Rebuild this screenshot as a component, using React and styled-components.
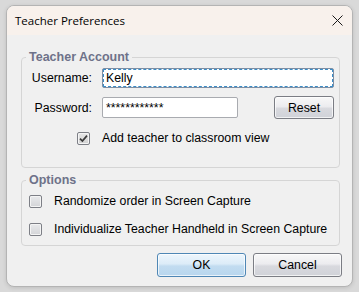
import styled, { createGlobalStyle } from "styled-components";

const GlobalStyle = createGlobalStyle`
  * { box-sizing: border-box; }
  html, body { margin: 0; padding: 0; background: #d9d9d9; }
  body {
    width: 359px;
    height: 292px;
    overflow: hidden;
    font-family: "Liberation Sans", Arial, sans-serif;
  }
`;

export default function App() {
  return (
    <>
      <GlobalStyle />
      <Window>
        <TitleBar>
          <Title>Teacher Preferences</Title>
          <CloseButton aria-label="Close">
            <svg width="11" height="11" viewBox="0 0 11 11">
              <path d="M0.5 0.5 L10.5 10.5 M10.5 0.5 L0.5 10.5" stroke="#1a1a1a" strokeWidth="1" fill="none" />
            </svg>
          </CloseButton>
        </TitleBar>
        <Body>
          <Group $pad="4px 5px 20px 0">
            <Legend>Teacher Account</Legend>
            <Row>
              <Label>Username:</Label>
              <Field $focused $grow>Kelly</Field>
            </Row>
            <Row $mt={8}>
              <Label>Password:</Label>
              <Field $width={136}>************</Field>
              <Spacer />
              <Button $width={60}>Reset</Button>
            </Row>
            <CheckRow $indent={55} $mt={10}>
              <Check checked />
              <CheckText>Add teacher to classroom view</CheckText>
            </CheckRow>
          </Group>
          <Group $pad="5px 5px 7px 0" $mt={5}>
            <Legend>Options</Legend>
            <CheckRow $indent={7}>
              <Check />
              <CheckText>Randomize order in Screen Capture</CheckText>
            </CheckRow>
            <CheckRow $indent={7} $mt={10}>
              <Check />
              <CheckText>Individualize Teacher Handheld in Screen Capture</CheckText>
            </CheckRow>
          </Group>
          <Buttons>
            <Button $width={89} $height={24} $primary>OK</Button>
            <Button $width={89} $height={24}>Cancel</Button>
          </Buttons>
        </Body>
      </Window>
    </>
  );
}

function Check({ checked }) {
  return (
    <Box $checked={checked}>
      {checked && (
        <svg width="9" height="9" viewBox="0 0 9 9">
          <path d="M1 4.6 L3.4 7 L8 1.6" stroke="#3a3a3a" strokeWidth="1.7" fill="none" />
        </svg>
      )}
    </Box>
  );
}

const Window = styled.div`
  margin: 5px 0 0 6px;
  width: 347px;
  height: 282px;
  border: 1px solid #b4b4b4;
  border-radius: 8px;
  background: #f0f0f0;
  overflow: hidden;
  display: flex;
  flex-direction: column;
  box-shadow: 0 1px 4px rgba(0, 0, 0, 0.12);
`;

const TitleBar = styled.div`
  height: 29px;
  flex: none;
  background: #f8f1ec;
  display: flex;
  align-items: center;
  justify-content: space-between;
  padding: 0 8px 0 8px;
`;

const Title = styled.span`
  font-family: "Open Sans", "Noto Sans", sans-serif;
  font-size: 11.5px;
  color: #000;
  margin-top: -1px;
`;

const CloseButton = styled.div`
  width: 11px;
  height: 11px;
  display: flex;
  margin-right: 1px;
  margin-top: -1px;
`;

const Body = styled.div`
  padding: 15px 0 0 14px;
  display: flex;
  flex-direction: column;
`;

const Group = styled.fieldset`
  width: 319px;
  margin: ${(p) => p.$mt || 0}px 0 0 0;
  padding: ${(p) => p.$pad};
  border: 1px solid #d5d5d5;
  border-radius: 4px;
  display: flex;
  flex-direction: column;
`;

const Legend = styled.legend`
  margin-left: 4px;
  padding: 0 3px;
  font-weight: bold;
  font-size: 12.5px;
  line-height: 14px;
  color: #6e7289;
`;

const Row = styled.div`
  display: flex;
  align-items: center;
  margin-top: ${(p) => p.$mt || 0}px;
`;

const Label = styled.span`
  width: 70px;
  text-align: right;
  margin-right: 10px;
  font-size: 12.3px;
  color: #000;
`;

const Field = styled.div`
  height: ${(p) => (p.$focused ? 20 : 21)}px;
  ${(p) => (p.$grow ? "flex: 1;" : `width: ${p.$width}px;`)}
  background: #fff;
  border: 1px solid ${(p) => (p.$focused ? "#7e8ea3" : "#a9abb0")};
  border-radius: 2px;
  padding-left: 3px;
  display: flex;
  align-items: center;
  font-size: 12.3px;
  color: #000;
  outline: ${(p) => (p.$focused ? "1px dashed #3a8cc6" : "none")};
  outline-offset: -2px;
`;

const Spacer = styled.div`
  flex: 1;
`;

const Button = styled.div`
  width: ${(p) => p.$width}px;
  height: ${(p) => p.$height || 23}px;
  display: flex;
  align-items: center;
  justify-content: center;
  font-size: 12.3px;
  color: #000;
  border: 1px solid ${(p) => (p.$primary ? "#4f87b5" : "#7b7d84")};
  border-radius: 3px;
  background: ${(p) =>
    p.$primary
      ? "linear-gradient(#eef6fc 0%, #dcecf8 45%, #c2dcf0 55%, #b8d6ee 100%)"
      : "linear-gradient(#f8f8f8 0%, #ececef 45%, #d8d9de 55%, #d0d2d8 100%)"};
  box-shadow: inset 0 0 0 1px rgba(255, 255, 255, 0.7);
`;

const CheckRow = styled.div`
  display: flex;
  align-items: center;
  height: 18px;
  padding-left: ${(p) => p.$indent}px;
  margin-top: ${(p) => p.$mt || 0}px;
`;

const Box = styled.div`
  width: 13px;
  height: 13px;
  flex: none;
  border: 1px solid #7d7f86;
  border-radius: 2px;
  background: ${(p) =>
    p.$checked ? "linear-gradient(#e6e6e6, #d2d2d2)" : "linear-gradient(#e9eaec, #d3d4d7)"};
  box-shadow: inset 0 0 0 1px #f4f4f4;
  display: flex;
  align-items: center;
  justify-content: center;
  margin-right: 12px;
`;

const CheckText = styled.span`
  font-size: 12.3px;
  color: #000;
`;

const Buttons = styled.div`
  display: flex;
  justify-content: flex-end;
  gap: 7px;
  margin-top: 7px;
  padding-right: 10px;
`;
